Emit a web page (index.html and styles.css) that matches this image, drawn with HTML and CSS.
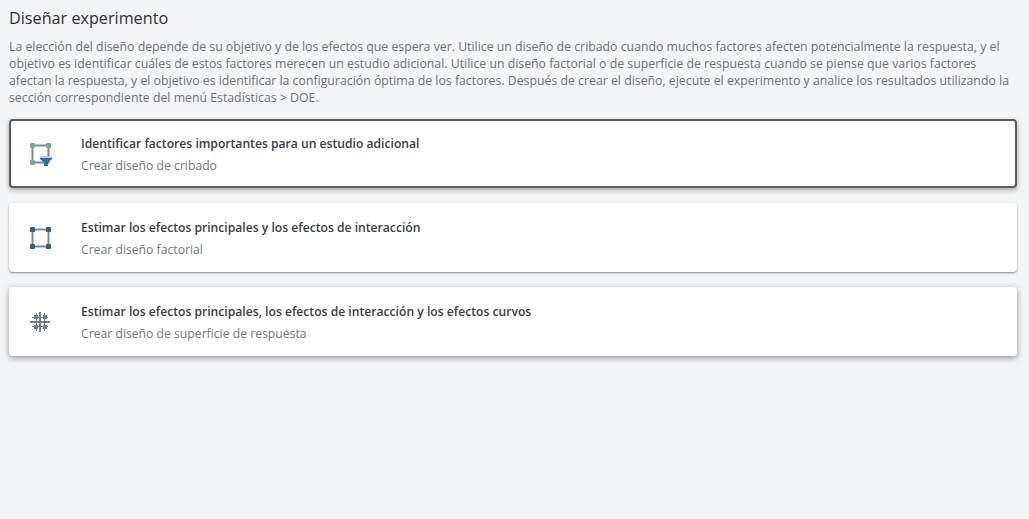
FILE: index.html
```html
<!DOCTYPE html>
<html lang="es">
<head>
  <meta charset="UTF-8">
  <title>Diseñar experimento</title>
  <link rel="stylesheet" href="styles.css">
</head>
<body>

<h2 class="page-title">Diseñar experimento</h2>
<p class="intro">La elección del diseño depende de su objetivo y de los efectos que espera ver. Utilice un diseño de cribado cuando muchos factores afecten potencialmente la respuesta, y el<br>objetivo es identificar cuáles de estos factores merecen un estudio adicional. Utilice un diseño factorial o de superficie de respuesta cuando se piense que varios factores<br>afectan la respuesta, y el objetivo es identificar la configuración óptima de los factores. Después de crear el diseño, ejecute el experimento y analice los resultados utilizando la<br>sección correspondiente del menú Estadísticas &gt; DOE.</p>

<div class="card-list">
  <div class="card card-selected">
    <svg class="card-icon" width="24" height="24" viewBox="0 0 24 24">
      <path d="M3.500 3.500H19.500V20.500H3.500Z" fill="none" stroke="#80898b" stroke-width="2"/>
      <rect x="1" y="1" width="5" height="5" rx="1" fill="#72ac8f"/>
      <rect x="17" y="1" width="5" height="5" rx="1" fill="#72ac8f"/>
      <rect x="1" y="18" width="5" height="5" rx="1" fill="#72ac8f"/>
      <rect x="11" y="14" width="12" height="2" fill="#b4d2ea"/>
      <path d="M11 16H23V17L19 20.500V24H15V20.500L11 17Z" fill="#2c6db0"/>
    </svg>
    <div class="card-text">
      <div class="card-title">Identificar factores importantes para un estudio adicional</div>
      <div class="card-sub">Crear diseño de cribado</div>
    </div>
  </div>

  <div class="card">
    <svg class="card-icon" width="24" height="24" viewBox="0 0 24 24">
      <path d="M3.500 3.500H19.500V20.500H3.500Z" fill="none" stroke="#80898b" stroke-width="2"/>
      <rect x="1" y="1" width="5" height="5" rx="1" fill="#2a5f9e"/>
      <rect x="17" y="1" width="5" height="5" rx="1" fill="#2a5f9e"/>
      <rect x="1" y="18" width="5" height="5" rx="1" fill="#2a5f9e"/>
      <rect x="17" y="18" width="5" height="5" rx="1" fill="#2a5f9e"/>
    </svg>
    <div class="card-text">
      <div class="card-title">Estimar los efectos principales y los efectos de interacción</div>
      <div class="card-sub">Crear diseño factorial</div>
    </div>
  </div>

  <div class="card card-raised">
    <svg class="card-icon" width="24" height="24" viewBox="0 0 24 24">
      <rect x="5" y="5" width="4" height="4" fill="#4a86bd"/>
      <rect x="14" y="5" width="4" height="4" fill="#4a86bd"/>
      <rect x="5" y="15" width="4" height="4" fill="#4a86bd"/>
      <rect x="14" y="15" width="4" height="4" fill="#4a86bd"/>
      <rect x="1" y="11" width="20" height="2" fill="#767c80"/>
      <rect x="10" y="2" width="2" height="20" fill="#767c80"/>
      <rect x="7" y="3" width="1" height="18" fill="#767c80"/>
      <rect x="15" y="3" width="1" height="18" fill="#767c80"/>
      <rect x="3" y="7" width="16" height="1" fill="#767c80"/>
      <rect x="3" y="16" width="16" height="1" fill="#767c80"/>
    </svg>
    <div class="card-text">
      <div class="card-title">Estimar los efectos principales, los efectos de interacción y los efectos curvos</div>
      <div class="card-sub">Crear diseño de superficie de respuesta</div>
    </div>
  </div>
</div>

</body>
</html>
```
FILE: styles.css
```css
html {
  height: 100%;
}
body {
  margin: 0;
  min-height: 100%;
  box-sizing: border-box;
  padding: 7px 12px 20px 9px;
  background-color: #f4f5f7;
  color: #2b2f33;
  font-family: "Open Sans", "Noto Sans", sans-serif;
}
.page-title {
  margin: 0;
  font-size: 16.2px;
  font-weight: 400;
  line-height: 22px;
  color: #2b2f33;
}
.intro {
  margin: 9px 0 0 0;
  font-size: 12.3px;
  line-height: 17px;
  color: #6e7276;
  white-space: nowrap;
}
.card-list {
  display: flex;
  flex-direction: column;
  gap: 15px;
  margin-top: 13px;
}
.card {
  display: flex;
  align-items: center;
  height: 69px;
  box-sizing: border-box;
  padding-left: 20px;
  background-color: #fff;
  border-radius: 4px;
  box-shadow: 0 1px 2px rgba(0,0,0,0.45);
}
.card-selected {
  border: 2px solid #5c5c5c;
  padding-left: 18px;
  box-shadow: 0 2px 5px rgba(0,0,0,0.35);
}
.card-raised {
  box-shadow: 0 2px 6px rgba(0,0,0,0.4);
}
.card-icon {
  flex: none;
  margin-right: 28px;
}
.card-text {
  padding-top: 3px;
}
.card-title {
  font-size: 12.15px;
  font-weight: 600;
  line-height: 18px;
  color: #3a3e42;
}
.card-sub {
  margin-top: 4px;
  font-size: 12.2px;
  line-height: 18px;
  color: #73777b;
}
```
